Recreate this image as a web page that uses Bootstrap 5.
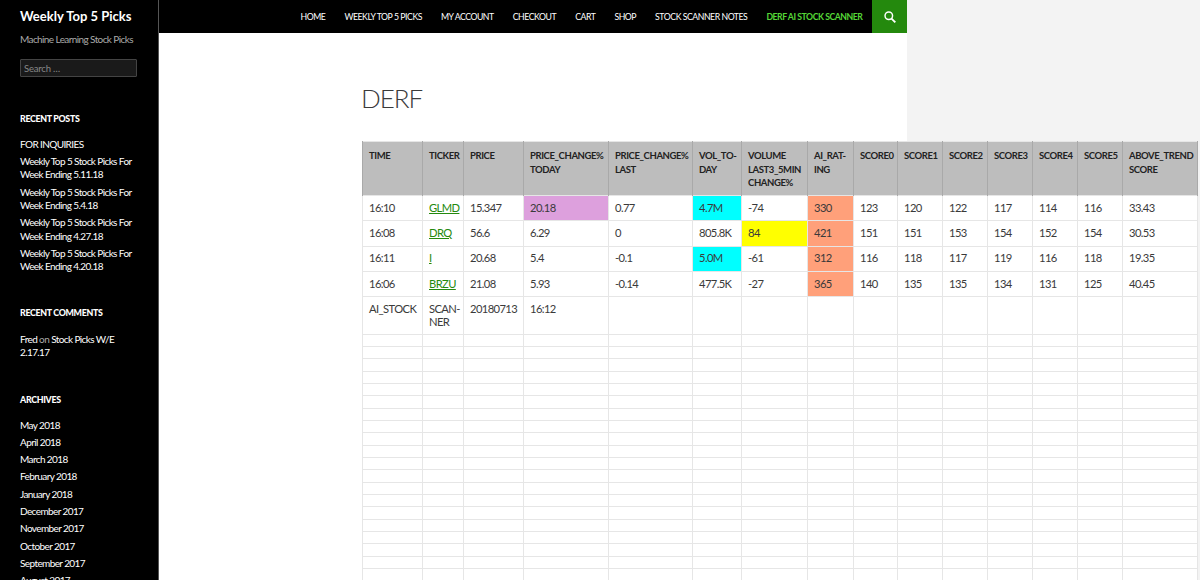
<!DOCTYPE html>
<html lang="en">
<head>
    <meta charset="UTF-8">
    <meta name="viewport" content="width=device-width, initial-scale=1">
    <title>DERF | Weekly Top 5 Picks</title>
    <link rel="stylesheet" href="https://cdn.jsdelivr.net/npm/bootstrap@5.3.0/dist/css/bootstrap.min.css">
    <style>
        body {
            background: #fff;
            font-family: Lato, "Liberation Sans", sans-serif;
            color: #2b2b2b;
        }
        .page-shell {
            height: 580px;
            overflow: hidden;
            background: #f3f3f3;
        }
        .side-col {
            flex: 0 0 159px;
            width: 159px;
            background: #000;
            border-right: 1px solid #555;
            padding: 0 21px 0 20px;
        }
        .site-title {
            font-size: 13px;
            font-weight: 700;
            line-height: 32px;
            color: #fff;
            white-space: nowrap;
        }
        .site-tag {
            font-size: 10px;
            letter-spacing: -0.6px;
            line-height: 14px;
            color: #aaa;
            white-space: nowrap;
        }
        .side-search {
            height: 18px;
            min-height: 18px;
            margin-top: 13px;
            padding: 0 3px;
            font-size: 9.5px;
            letter-spacing: -0.2px;
            background: #1a1a1a;
            border: 1px solid #444;
            border-radius: 1px;
            color: #888;
        }
        .side-search::placeholder { color: #888; }
        .side-head {
            font-size: 8.8px;
            font-weight: 900;
            letter-spacing: -0.3px;
            line-height: 13px;
            color: #fff;
            text-transform: uppercase;
            margin: 34.5px 0 13px;
        }
        .side-head-comments { margin-top: 32px; margin-bottom: 14px; }
        .side-head-archives { margin-top: 33px; }
        .side-list {
            list-style: none;
            padding: 0;
            margin: 0;
            font-size: 10px;
            letter-spacing: -0.6px;
            line-height: 13.4px;
        }
        .side-list li { margin-bottom: 3.9px; color: #fff; }
        .side-list a { color: #fff; text-decoration: none; }
        .side-list .muted-on { color: #aaa; }
        .main-col {
            flex: 0 0 748px;
            min-width: 0;
        }
        .top-menu {
            background: #000;
            height: 33px;
        }
        .top-menu .nav-link {
            padding: 0 9.5px;
            font-size: 8.7px;
            letter-spacing: -0.45px;
            line-height: 33px;
            color: #fff;
            text-transform: uppercase;
            white-space: nowrap;
        }
        .top-menu .nav-link.active { color: #55d737; font-weight: 700; }
        .search-btn {
            width: 35px;
            height: 33px;
            background: #24890d;
        }
        .page-body {
            height: 547px;
            background: #fff;
            padding: 48px 0 0 202px;
        }
        .page-title {
            font-size: 26px;
            font-weight: 300;
            letter-spacing: -1px;
            line-height: 34px;
            margin: 0 0 26px;
            color: #3a3a3a;
        }
        .scan-table {
            table-layout: fixed;
            width: 835px;
            margin: 0 0 0 1px;
            border-color: #e6e6e6;
            font-size: 11.2px;
            letter-spacing: -0.6px;
        }
        .scan-table th {
            background: #bdbdbd;
            border-color: #a9a9a9;
            color: #222;
            font-size: 9.5px;
            font-weight: 700;
            letter-spacing: -0.4px;
            line-height: 13.5px;
            padding: 7px 6px 0;
            height: 54px;
            vertical-align: top;
        }
        .scan-table td {
            padding: 0 6px 2px;
            height: 25.3px;
            line-height: 13px;
            vertical-align: middle;
            color: #3a3a3a;
            background: #fff;
        }
        .scan-table td a { color: #24890d; }
        .scan-table .tall-row td { height: 37.5px; padding-top: 5px; vertical-align: top; }
        .scan-table .blank-row td { height: 12.33px; padding: 0; }
        .scan-table td.hl-plum { background: #dda0dd; }
        .scan-table td.hl-cyan { background: #00ffff; }
        .scan-table td.hl-yellow { background: #ffff00; }
        .scan-table td.hl-salmon { background: #ffa07a; }
        .col-w41 { width: 41px; }
        .col-w44 { width: 44px; }
        .col-w45 { width: 45px; }
        .col-w46 { width: 46px; }
        .col-w49 { width: 49px; }
        .col-w60 { width: 60px; }
        .col-w66 { width: 66px; }
        .col-w75 { width: 75px; }
        .col-w84 { width: 84px; }
        .col-w85 { width: 85px; }
    </style>
</head>
<body>

<div class="page-shell d-flex">
    <!-- Sidebar -->
    <aside class="side-col">
        <div class="site-title">Weekly Top 5 Picks</div>
        <div class="site-tag">Machine Learning Stock Picks</div>
        <input class="form-control side-search" type="text" placeholder="Search …">

        <h2 class="side-head">Recent Posts</h2>
        <ul class="side-list">
            <li><a href="#">FOR INQUIRIES</a></li>
            <li><a href="#">Weekly Top 5 Stock Picks For Week Ending 5.11.18</a></li>
            <li><a href="#">Weekly Top 5 Stock Picks For Week Ending 5.4.18</a></li>
            <li><a href="#">Weekly Top 5 Stock Picks For Week Ending 4.27.18</a></li>
            <li><a href="#">Weekly Top 5 Stock Picks For Week Ending 4.20.18</a></li>
        </ul>

        <h2 class="side-head side-head-comments">Recent Comments</h2>
        <ul class="side-list">
            <li><a href="#">Fred</a> <span class="muted-on">on</span> <a href="#">Stock Picks W/E 2.17.17</a></li>
        </ul>

        <h2 class="side-head side-head-archives">Archives</h2>
        <ul class="side-list">
            <li><a href="#">May 2018</a></li>
            <li><a href="#">April 2018</a></li>
            <li><a href="#">March 2018</a></li>
            <li><a href="#">February 2018</a></li>
            <li><a href="#">January 2018</a></li>
            <li><a href="#">December 2017</a></li>
            <li><a href="#">November 2017</a></li>
            <li><a href="#">October 2017</a></li>
            <li><a href="#">September 2017</a></li>
            <li><a href="#">August 2017</a></li>
        </ul>
    </aside>

    <div class="main-col">
        <!-- Top menu -->
        <nav class="top-menu d-flex justify-content-end">
            <ul class="nav flex-nowrap">
                <li class="nav-item"><a class="nav-link" href="#">Home</a></li>
                <li class="nav-item"><a class="nav-link" href="#">Weekly Top 5 Picks</a></li>
                <li class="nav-item"><a class="nav-link" href="#">My Account</a></li>
                <li class="nav-item"><a class="nav-link" href="#">Checkout</a></li>
                <li class="nav-item"><a class="nav-link" href="#">Cart</a></li>
                <li class="nav-item"><a class="nav-link" href="#">Shop</a></li>
                <li class="nav-item"><a class="nav-link" href="#">Stock Scanner Notes</a></li>
                <li class="nav-item"><a class="nav-link active" href="#">DERF AI Stock Scanner</a></li>
            </ul>
            <div class="search-btn d-flex align-items-center justify-content-center">
                <svg width="12" height="12" viewBox="0 0 14 14" fill="none" stroke="#fff" stroke-width="1.7">
                    <circle cx="5.6" cy="5.6" r="4.4"/>
                    <path d="M8.8 8.8 13.2 13.2" stroke-width="2.2"/>
                </svg>
            </div>
        </nav>

        <div class="page-body">
            <h1 class="page-title">DERF</h1>
            <table class="table table-bordered scan-table">
                <thead>
                    <tr>
                        <th class="col-w60">TIME</th><th class="col-w41">TICKER</th><th class="col-w60">PRICE</th><th class="col-w85">PRICE_CHANGE% TODAY</th><th class="col-w84">PRICE_CHANGE% LAST</th>
                        <th class="col-w49">VOL_TO-DAY</th><th class="col-w66">VOLUME LAST3_5MIN CHANGE%</th><th class="col-w46">AI_RAT-ING</th><th class="col-w44">SCORE0</th><th class="col-w45">SCORE1</th>
                        <th class="col-w45">SCORE2</th><th class="col-w45">SCORE3</th><th class="col-w45">SCORE4</th><th class="col-w45">SCORE5</th><th class="col-w75">ABOVE_TREND SCORE</th>
                    </tr>
                </thead>
                <tbody id="scan-rows">
                    <tr><td>16:10</td><td><a href="#">GLMD</a></td><td>15.347</td><td class="hl-plum">20.18</td><td>0.77</td><td class="hl-cyan">4.7M</td><td>-74</td><td class="hl-salmon">330</td><td>123</td><td>120</td><td>122</td><td>117</td><td>114</td><td>116</td><td>33.43</td></tr>
                    <tr><td>16:08</td><td><a href="#">DRQ</a></td><td>56.6</td><td>6.29</td><td>0</td><td>805.8K</td><td class="hl-yellow">84</td><td class="hl-salmon">421</td><td>151</td><td>151</td><td>153</td><td>154</td><td>152</td><td>154</td><td>30.53</td></tr>
                    <tr><td>16:11</td><td><a href="#">I</a></td><td>20.68</td><td>5.4</td><td>-0.1</td><td class="hl-cyan">5.0M</td><td>-61</td><td class="hl-salmon">312</td><td>116</td><td>118</td><td>117</td><td>119</td><td>116</td><td>118</td><td>19.35</td></tr>
                    <tr><td>16:06</td><td><a href="#">BRZU</a></td><td>21.08</td><td>5.93</td><td>-0.14</td><td>477.5K</td><td>-27</td><td class="hl-salmon">365</td><td>140</td><td>135</td><td>135</td><td>134</td><td>131</td><td>125</td><td>40.45</td></tr>
                    <tr class="tall-row"><td>AI_STOCK</td><td>SCAN-NER</td><td>20180713</td><td>16:12</td><td></td><td></td><td></td><td></td><td></td><td></td><td></td><td></td><td></td><td></td><td></td></tr>
                </tbody>
            </table>
        </div>
    </div>
</div>

<script>
// empty rows under the data
const rows = document.getElementById('scan-rows');
for (let i = 0; i < 20; i++) {
    rows.innerHTML += '<tr class="blank-row">' + '<td></td>'.repeat(15) + '</tr>';
}
</script>
<script src="https://cdn.jsdelivr.net/npm/bootstrap@5.3.0/dist/js/bootstrap.bundle.min.js"></script>
</body>
</html>
